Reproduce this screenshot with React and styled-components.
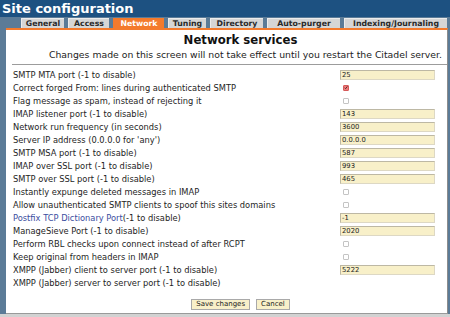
import React from 'react'
import styled, { createGlobalStyle } from 'styled-components'

const GlobalStyle = createGlobalStyle`
    html, body {
        margin: 0;
        padding: 0;
        background: #d2d2d2;
    }
    body {
        font-family: "DejaVu Sans", Verdana, sans-serif;
    }
`

const tabs = [
    { name: 'General', width: 43 },
    { name: 'Access', width: 41 },
    { name: 'Network', width: 51, active: true },
    { name: 'Tuning', width: 38 },
    { name: 'Directory', width: 53 },
    { name: 'Auto-purger', width: 73 },
    { name: 'Indexing/Journaling', width: 103 },
]

const rows = [
    { label: 'SMTP MTA port (-1 to disable)', value: '25' },
    { label: 'Correct forged From: lines during authenticated SMTP', check: true },
    { label: 'Flag message as spam, instead of rejecting it', check: false },
    { label: 'IMAP listener port (-1 to disable)', value: '143' },
    { label: 'Network run frequency (in seconds)', value: '3600' },
    { label: "Server IP address (0.0.0.0 for 'any')", value: '0.0.0.0' },
    { label: 'SMTP MSA port (-1 to disable)', value: '587' },
    { label: 'IMAP over SSL port (-1 to disable)', value: '993' },
    { label: 'SMTP over SSL port (-1 to disable)', value: '465' },
    { label: 'Instantly expunge deleted messages in IMAP', check: false },
    { label: 'Allow unauthenticated SMTP clients to spoof this sites domains', check: false },
    { label: '(-1 to disable)', link: 'Postfix TCP Dictionary Port', value: '-1' },
    { label: 'ManageSieve Port (-1 to disable)', value: '2020' },
    { label: 'Perform RBL checks upon connect instead of after RCPT', check: false },
    { label: 'Keep original from headers in IMAP', check: false },
    { label: 'XMPP (Jabber) client to server port (-1 to disable)', value: '5222' },
    { label: 'XMPP (Jabber) server to server port (-1 to disable)' },
]

function App() {
    return (
        <Page>
            <GlobalStyle />
            <TitleBar>Site configuration</TitleBar>
            <Body>
                <TabRow>
                    {tabs.map(t => (
                        <Tab key={t.name} $width={t.width} $active={t.active}>{t.name}</Tab>
                    ))}
                </TabRow>
                <Panel>
                    <Intro>
                        <Heading>Network services</Heading>
                        <Notice>Changes made on this screen will not take effect until you restart the Citadel server.</Notice>
                    </Intro>
                    <Rule />
                    <Form>
                        {rows.map(r => (
                            <Row key={r.label + (r.link || '')}>
                                <Label>
                                    {r.link && <Link>{r.link}</Link>}
                                    {r.label}
                                </Label>
                                <Cell>
                                    {r.value !== undefined && <Field>{r.value}</Field>}
                                    {r.check !== undefined && (
                                        <Check $checked={r.check}>
                                            {r.check && (
                                                <svg width="5" height="5" viewBox="0 0 10 10">
                                                    <path d="M1.5 5.5 L4 8 L8.5 2" fill="none" stroke="#402020" strokeWidth="2" />
                                                </svg>
                                            )}
                                        </Check>
                                    )}
                                </Cell>
                            </Row>
                        ))}
                    </Form>
                    <Buttons>
                        <Button>Save changes</Button>
                        <Button>Cancel</Button>
                    </Buttons>
                </Panel>
            </Body>
        </Page>
    )
}

export default App

const Page = styled.div`
    width: 450px;
    height: 317px;
    display: flex;
    flex-direction: column;
    background: #d2d2d2;
    overflow: hidden;
`

const TitleBar = styled.div`
    height: 17px;
    background: #1d5181;
    color: #fff;
    font-weight: bold;
    font-size: 13px;
    line-height: 17px;
    padding-left: 2px;
`

const Body = styled.div`
    flex: 1;
    display: flex;
    flex-direction: column;
    background: #5b7b97;
    padding-left: 6px;
    margin-bottom: 3px;
`

const TabRow = styled.div`
    height: 11px;
    display: flex;
    align-items: flex-end;
    gap: 4px;
    padding-left: 15px;
`

const Tab = styled.div`
    width: ${p => p.$width}px;
    height: 10px;
    box-sizing: border-box;
    display: flex;
    align-items: center;
    justify-content: center;
    font-size: 7.8px;
    font-weight: bold;
    color: ${p => (p.$active ? '#fff' : '#2a2a2a')};
    background: ${p => (p.$active ? '#f47a2c' : '#d6d6d6')};
    border-top: 1px solid ${p => (p.$active ? '#f47a2c' : '#ececec')};
    border-left: 1px solid ${p => (p.$active ? '#f47a2c' : '#ececec')};
`

const Panel = styled.div`
    flex: 1;
    display: flex;
    flex-direction: column;
    background: #fff;
    border-top: 2px solid #f47a2c;
    border-right: 1px solid #8c8c8c;
    border-bottom: 1px solid #9a9a9a;
    margin-right: 2px;
`

const Intro = styled.div`
    display: flex;
    flex-direction: column;
    align-items: center;
    padding: 3px 0 0 28px;
`

const Heading = styled.div`
    font-size: 11.7px;
    font-weight: bold;
    color: #111;
    line-height: 14px;
`

const Notice = styled.div`
    font-size: 9.3px;
    color: #222;
    line-height: 11px;
    margin: 2px 0 0 10px;
    white-space: nowrap;
`

const Rule = styled.div`
    height: 1px;
    background: #9c9c9c;
    margin: 4px 0 3px 6px;
`

const Form = styled.div`
    display: flex;
    flex-direction: column;
    padding: 0 12px 0 7px;
`

const Row = styled.div`
    height: 13px;
    display: grid;
    grid-template-columns: 1fr 95px;
    align-items: center;
`

const Label = styled.div`
    font-size: 8.3px;
    line-height: 10px;
    color: #1e1e1e;
    white-space: nowrap;
`

const Link = styled.span`
    color: #3a4ea0;
`

const Cell = styled.div`
    display: flex;
    align-items: center;
`

const Field = styled.div`
    width: 95px;
    height: 10px;
    box-sizing: border-box;
    background: #f8f0c9;
    border: 1px solid #bdb8a4;
    border-right-color: #ddd8c4;
    border-bottom-color: #ddd8c4;
    font-size: 6.8px;
    line-height: 8px;
    padding-left: 1px;
    color: #222;
`

const Check = styled.div`
    width: 6px;
    height: 6px;
    margin-left: 3px;
    box-sizing: border-box;
    border-radius: 1px;
    border: 1px solid ${p => (p.$checked ? '#d65a5a' : '#c4c4c4')};
    background: ${p => (p.$checked ? '#ef7b7b' : '#fff')};
    display: flex;
    align-items: center;
    justify-content: center;
    svg {
        display: block;
    }
`

const Buttons = styled.div`
    display: flex;
    justify-content: center;
    gap: 6px;
    margin-top: 10px;
    padding-left: 28px;
`

const Button = styled.div`
    height: 11px;
    box-sizing: border-box;
    padding: 0 4px;
    background: #f8f0c9;
    border: 1px solid #a9a9a9;
    font-size: 7px;
    line-height: 9px;
    color: #222;
`
